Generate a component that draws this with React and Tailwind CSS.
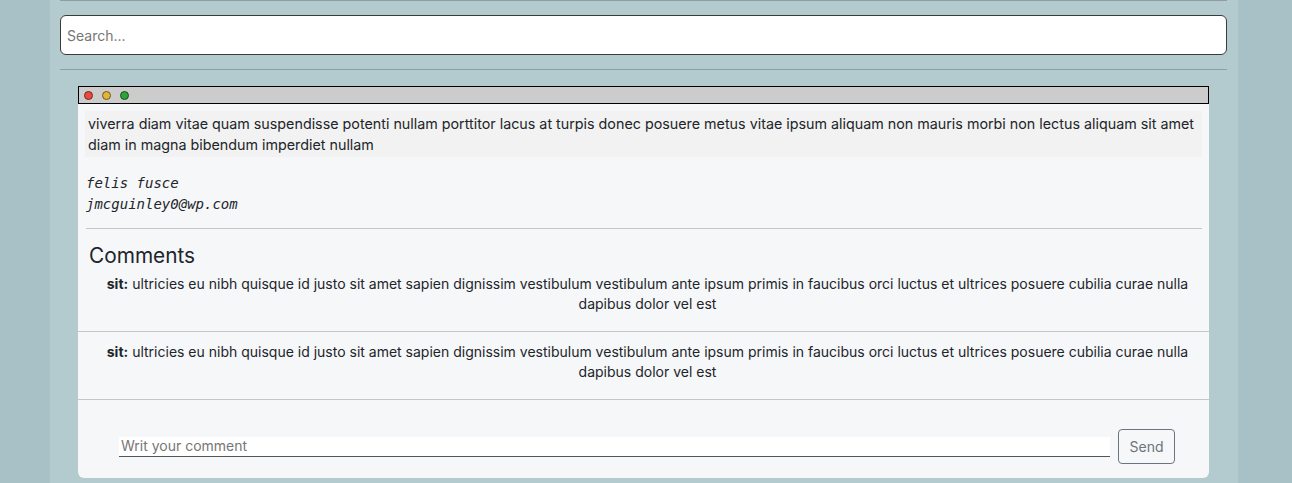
const post = {
  body: "viverra diam vitae quam suspendisse potenti nullam porttitor lacus at turpis donec posuere metus vitae ipsum aliquam non mauris morbi non lectus aliquam sit amet diam in magna bibendum imperdiet nullam",
  author: "felis fusce",
  email: "jmcguinley0@wp.com",
};

const comments = [
  {
    user: "sit",
    text: "ultricies eu nibh quisque id justo sit amet sapien dignissim vestibulum vestibulum ante ipsum primis in faucibus orci luctus et ultrices posuere cubilia curae nulla dapibus dolor vel est",
  },
  {
    user: "sit",
    text: "ultricies eu nibh quisque id justo sit amet sapien dignissim vestibulum vestibulum ante ipsum primis in faucibus orci luctus et ultrices posuere cubilia curae nulla dapibus dolor vel est",
  },
];

const WindowBar = () => (
  <div className="flex h-[18px] items-center gap-[9px] border border-black bg-[#cccccc] pl-[5px]">
    <span className="h-[9px] w-[9px] rounded-full border border-[#6b2a22] bg-[#f0473c]" />
    <span className="h-[9px] w-[9px] rounded-full border border-[#6e5a1c] bg-[#e3b43a]" />
    <span className="h-[9px] w-[9px] rounded-full border border-[#1f4f22] bg-[#2ea43a]" />
  </div>
);

const Comment = ({ comment, first }) => (
  <div
    className={
      "border-b border-[#c4c6c8] pb-[17px] pl-[28px] pr-[20px] text-center text-[14px] leading-[20px] text-[#212529] " +
      (first ? "pt-[4px]" : "pt-[10px]")
    }
  >
    <b>{comment.user}:</b> {comment.text}
  </div>
);

export default function App() {
  return (
    <div className="min-h-[483px] bg-[#a8c1c6] font-['Inter','Noto_Sans',sans-serif]">
      <div className="ml-[50px] w-[1188px] bg-[#b3cacf] pl-[10px] pr-[11px] pb-[5px]">
        <hr className="border-t border-[#8d9fa3]" />
        <div className="py-[14px]">
          <input
            placeholder="Search..."
            className="block h-[40px] w-full rounded-[6px] border border-[#3b3b3b] bg-white px-[6px] text-[14px] text-[#212529] outline-none placeholder:text-[#767676]"
          />
        </div>
        <hr className="border-t border-[#8d9fa3]" />

        <div className="mx-[18px] mt-[16px] overflow-hidden rounded-b-[6px] bg-[#f6f7f9]">
          <WindowBar />
          <div className="ml-[7px] mr-[7px] mt-[7px] bg-[#f2f2f2] py-[2px] pl-[3px] pr-[2px] text-[14.3px] leading-[21px] text-[#212529]">
            {post.body}
          </div>
          <div className="mt-[16px] pl-[8px] font-['DejaVu_Sans_Mono',monospace] text-[14px] italic leading-[21px] text-[#212529]">
            <div>{post.author}</div>
            <div>{post.email}</div>
          </div>
          <hr className="ml-[8px] mr-[7px] mt-[13px] border-t border-[#c4c6c8]" />
          <h2 className="pl-[11px] pt-[13px] text-[20.8px] leading-[28px] text-[#212529]">Comments</h2>
          {comments.map((c, i) => (
            <Comment key={i} comment={c} first={i === 0} />
          ))}
          <form
            className="flex items-center gap-[8px] pb-[14px] pl-[41px] pr-[34px] pt-[29px]"
            onSubmit={(e) => e.preventDefault()}
          >
            <input
              placeholder="Writ your comment"
              className="h-[20px] flex-1 border-b border-[#555] bg-white px-[2px] text-[14px] leading-[20px] outline-none placeholder:text-[#767676]"
            />
            <button
              type="submit"
              className="h-[35px] w-[57px] rounded-[4px] border border-[#6c757d] text-[14px] text-[#6c757d]"
            >
              Send
            </button>
          </form>
        </div>
      </div>
    </div>
  );
}
